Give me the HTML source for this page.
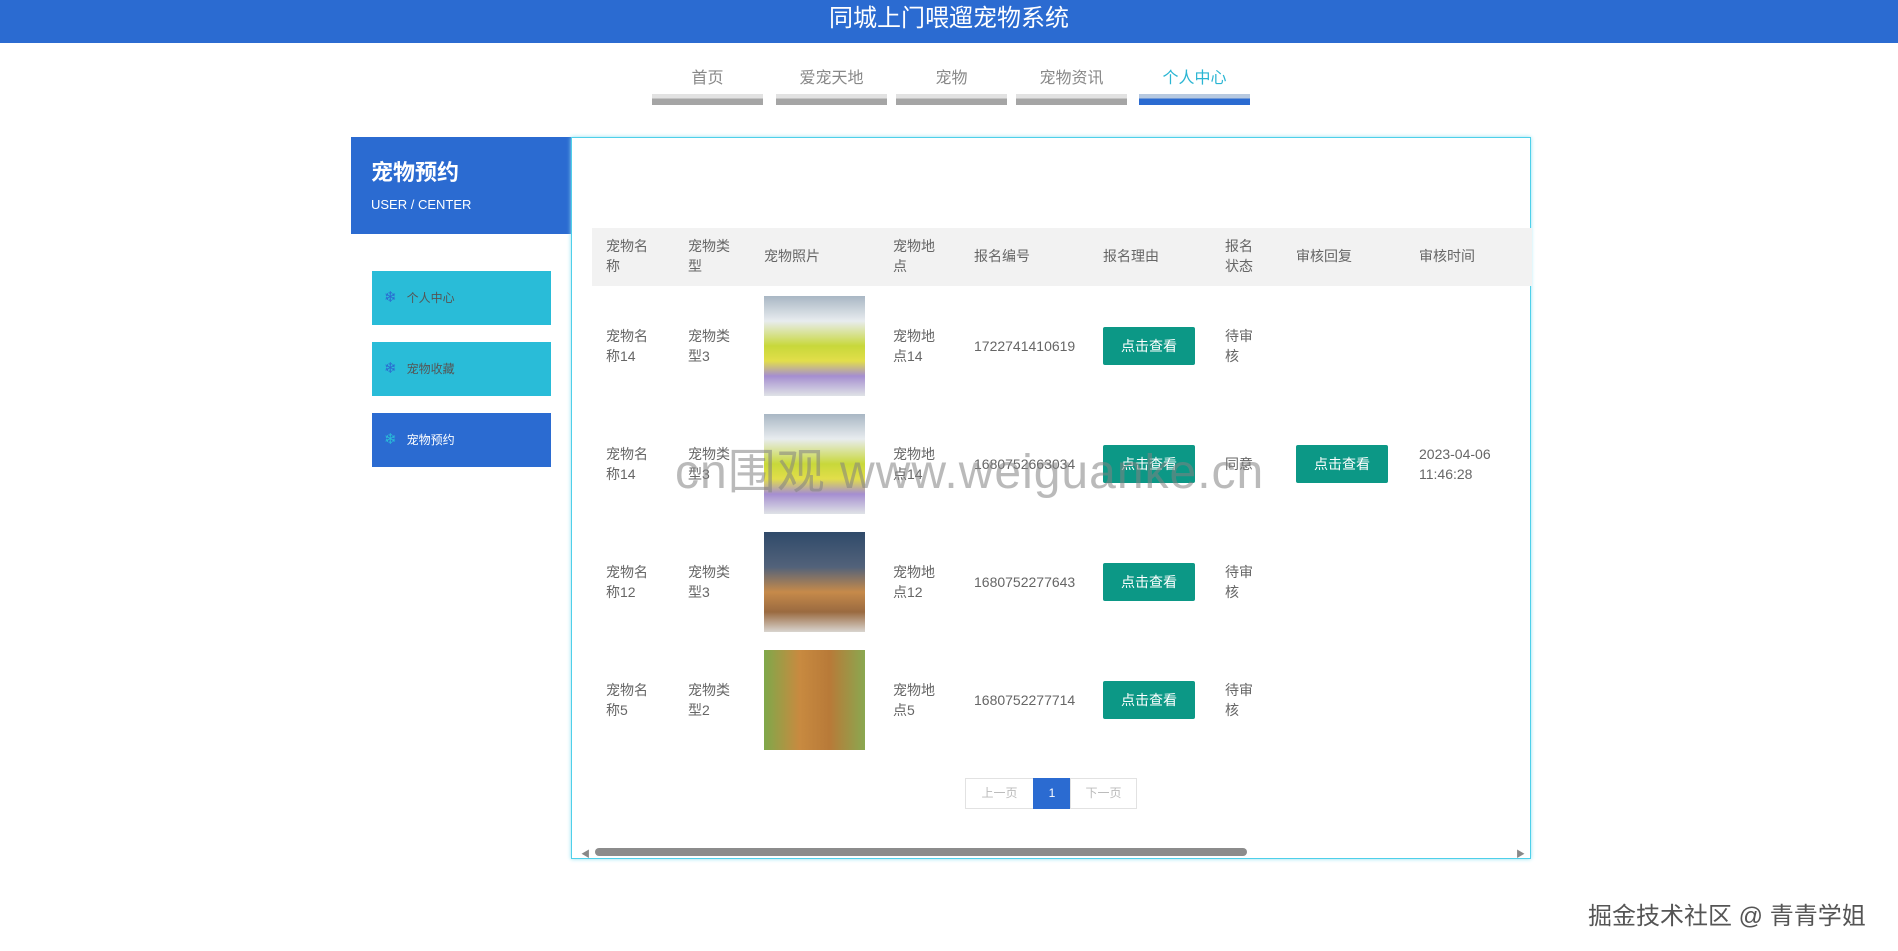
<!DOCTYPE html>
<html><head><meta charset="utf-8"><style>
*{margin:0;padding:0;box-sizing:border-box}
body{width:1898px;height:951px;background:#fff;font-family:"Liberation Sans","Noto Sans CJK SC",sans-serif;position:relative;overflow:hidden;color:#666}
.hd{position:absolute;left:0;top:0;width:1898px;height:43px;background:#2b6bd1;color:#fff;font-size:24px;text-align:center;line-height:38px}
.nav{position:absolute;top:64px;text-align:center;font-size:16px;color:#888;width:111px}
.nav i{display:block;margin-top:6px;height:11px;background:linear-gradient(#e2e2e2 40%,#a5a5a5 40%)}
.nav.on{color:#2ab5d3}.nav.on i{background:linear-gradient(#b7c9e0 40%,#2b6bd1 40%)}
.sh{position:absolute;left:351px;top:137px;width:220px;height:97px;background:#2b6bd1;color:#fff;padding:18px 0 0 20px}
.sh b{font-size:22px;display:block}
.sh span{font-size:13px;display:block;margin-top:10px}
.mi{position:absolute;left:372px;width:179px;height:54px;background:#29bcd8;font-size:12px;color:#555;line-height:54px;padding-left:12px}
.mi em{color:#2b6bd1;font-style:normal;margin-right:10px;font-size:15px}
.mi.on{background:#2b6bd1;color:#fff}.mi.on em{color:#29bcd8}
.box{position:absolute;left:571px;top:137px;width:960px;height:722px;border:1px solid #4fd0ea;box-shadow:0 0 4px #8fe0f0}
.th{position:absolute;left:20px;top:90px;width:940px;height:58px;background:#f2f2f2}
.t{position:absolute;font-size:14px;line-height:20px;color:#666}
.img{position:absolute;width:101px;height:100px}
.btn{position:absolute;width:92px;height:38px;background:#0c9886;color:#fff;font-size:14px;text-align:center;line-height:38px;border-radius:2px}
.pg{position:absolute;top:640px;height:31px;border:1px solid #e2e2e2;font-size:12px;color:#bbb;text-align:center;line-height:29px}
.wm{position:absolute;left:1588px;top:896px;font-size:24px;color:#555;text-shadow:0 0 2px #fff}
.wm2{position:absolute;left:675px;top:432px;font-size:48px;color:rgba(130,130,130,.55);letter-spacing:1px}
</style></head><body>
<div class="hd">同城上门喂遛宠物系统</div>
<div class="nav" style="left:652px">首页<i></i></div>
<div class="nav" style="left:776px">爱宠天地<i></i></div>
<div class="nav" style="left:896px">宠物<i></i></div>
<div class="nav" style="left:1016px">宠物资讯<i></i></div>
<div class="nav on" style="left:1139px">个人中心<i></i></div>
<div class="sh"><b>宠物预约</b><span>USER / CENTER</span></div>
<div class="mi" style="top:271px"><em>❄</em>个人中心</div>
<div class="mi" style="top:342px"><em>❄</em>宠物收藏</div>
<div class="mi on" style="top:413px"><em>❄</em>宠物预约</div>
<div class="box">
<div class="th"></div>
<div class="t" style="left:34px;top:98px">宠物名<br>称</div>
<div class="t" style="left:116px;top:98px">宠物类<br>型</div>
<div class="t" style="left:192px;top:108px">宠物照片</div>
<div class="t" style="left:321px;top:98px">宠物地<br>点</div>
<div class="t" style="left:402px;top:108px">报名编号</div>
<div class="t" style="left:531px;top:108px">报名理由</div>
<div class="t" style="left:653px;top:98px">报名<br>状态</div>
<div class="t" style="left:724px;top:108px">审核回复</div>
<div class="t" style="left:847px;top:108px">审核时间</div>

<div class="t" style="left:34px;top:188px">宠物名<br>称14</div>
<div class="t" style="left:116px;top:188px">宠物类<br>型3</div>
<div class="img" style="left:192px;top:158px;background:linear-gradient(#a9b7c4 0,#e8ecef 25%,#c8d83a 50%,#e2de4a 65%,#a58ed0 80%,#dfe2e6)"></div>
<div class="t" style="left:321px;top:188px">宠物地<br>点14</div>
<div class="t" style="left:402px;top:198px">1722741410619</div>
<div class="btn" style="left:531px;top:189px">点击查看</div>
<div class="t" style="left:653px;top:188px">待审<br>核</div>

<div class="t" style="left:34px;top:306px">宠物名<br>称14</div>
<div class="t" style="left:116px;top:306px">宠物类<br>型3</div>
<div class="img" style="left:192px;top:276px;background:linear-gradient(#a9b7c4 0,#e8ecef 25%,#c8d83a 50%,#e2de4a 65%,#a58ed0 80%,#dfe2e6)"></div>
<div class="t" style="left:321px;top:306px">宠物地<br>点14</div>
<div class="t" style="left:402px;top:316px">1680752663034</div>
<div class="btn" style="left:531px;top:307px">点击查看</div>
<div class="t" style="left:653px;top:316px">同意</div>
<div class="btn" style="left:724px;top:307px">点击查看</div>
<div class="t" style="left:847px;top:306px">2023-04-06<br>11:46:28</div>

<div class="t" style="left:34px;top:424px">宠物名<br>称12</div>
<div class="t" style="left:116px;top:424px">宠物类<br>型3</div>
<div class="img" style="left:192px;top:394px;background:linear-gradient(#2f4a6a,#52627a 35%,#c68a4a 60%,#9a6a40 80%,#d9d4cf)"></div>
<div class="t" style="left:321px;top:424px">宠物地<br>点12</div>
<div class="t" style="left:402px;top:434px">1680752277643</div>
<div class="btn" style="left:531px;top:425px">点击查看</div>
<div class="t" style="left:653px;top:424px">待审<br>核</div>

<div class="t" style="left:34px;top:542px">宠物名<br>称5</div>
<div class="t" style="left:116px;top:542px">宠物类<br>型2</div>
<div class="img" style="left:192px;top:512px;background:linear-gradient(90deg,#7fa84a,#c88a40 35%,#b87a38 65%,#8aa850)"></div>
<div class="t" style="left:321px;top:542px">宠物地<br>点5</div>
<div class="t" style="left:402px;top:552px">1680752277714</div>
<div class="btn" style="left:531px;top:543px">点击查看</div>
<div class="t" style="left:653px;top:542px">待审<br>核</div>

<div class="pg" style="left:393px;width:69px">上一页</div>
<div class="pg" style="left:461px;width:38px;background:#2b6bd1;border-color:#2b6bd1;color:#fff">1</div>
<div class="pg" style="left:498px;width:67px">下一页</div>
<div style="position:absolute;left:9px;top:709px;font-size:9px;color:#888">◀</div>
<div style="position:absolute;left:944px;top:709px;font-size:9px;color:#888">▶</div>
<div style="position:absolute;left:23px;top:710px;width:652px;height:8px;border-radius:4px;background:#8c8c8c"></div>
</div>
<div class="wm2">cn围观 www.weiguanke.cn</div>
<div class="wm">掘金技术社区 @ 青青学姐</div>
</body></html>
